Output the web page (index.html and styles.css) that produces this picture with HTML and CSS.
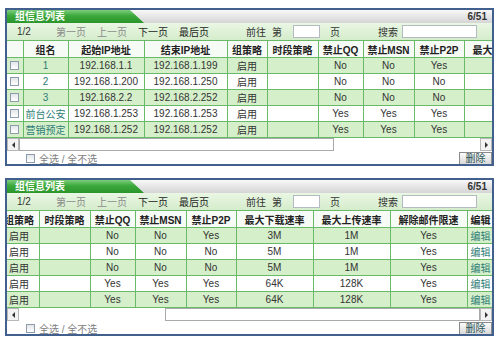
FILE: index.html
```html
<!DOCTYPE html>
<html lang="zh-CN">
  <head>
    <meta charset="UTF-8" />
    <meta name="viewport" content="width=device-width, initial-scale=1.0" />
    <title>组信息列表</title>

    <link rel="stylesheet" href="styles.css">
  </head>
  <body>
    <div class="panel">
      <div class="panel_head">
        <div class="panel_tab">组信息列表</div>
        <div class="panel_count">6/51</div>
      </div>
      <div class="toolbar">
        <span class="page_num">1/2</span>
        <a class="page_link first disabled">第一页</a>
        <a class="page_link disabled">上一页</a>
        <a class="page_link">下一页</a>
        <a class="page_link">最后页</a>
        <span class="goto">前往</span>
        <span class="goto_nth">第</span>
        <input class="page_input" type="text">
        <span class="goto_page">页</span>
        <span class="search_label">搜索</span>
        <input class="search_input" type="text">
      </div>
      <div class="grid_wrap">
        <table class="grid">
          <colgroup>
            <col class="c_check"><col class="c_name"><col class="c_ip"><col class="c_ip2"><col class="c_policy">
            <col class="c_time"><col class="c_qq"><col class="c_msn"><col class="c_p2p">
            <col class="c_rate"><col class="c_rate"><col class="c_rate"><col class="c_edit">
          </colgroup>
          <thead>
            <tr>
              <th></th><th>组名</th><th>起始IP地址</th><th>结束IP地址</th><th>组策略</th>
              <th>时段策略</th><th>禁止QQ</th><th>禁止MSN</th><th>禁止P2P</th>
              <th>最大下载速率</th><th>最大上传速率</th><th>解除邮件限速</th><th>编辑</th>
            </tr>
          </thead>
          <tbody>
            <tr>
              <td><input type="checkbox" class="check"></td><td><a class="link">1</a></td>
              <td>192.168.1.1</td><td>192.168.1.199</td><td>启用</td><td></td>
              <td>No</td><td>No</td><td>Yes</td><td>3M</td><td>1M</td><td>Yes</td><td><a class="link">编辑</a></td>
            </tr>
            <tr>
              <td><input type="checkbox" class="check"></td><td><a class="link">2</a></td>
              <td>192.168.1.200</td><td>192.168.1.250</td><td>启用</td><td></td>
              <td>No</td><td>No</td><td>No</td><td>5M</td><td>1M</td><td>Yes</td><td><a class="link">编辑</a></td>
            </tr>
            <tr>
              <td><input type="checkbox" class="check"></td><td><a class="link">3</a></td>
              <td>192.168.2.2</td><td>192.168.2.252</td><td>启用</td><td></td>
              <td>No</td><td>No</td><td>No</td><td>5M</td><td>1M</td><td>Yes</td><td><a class="link">编辑</a></td>
            </tr>
            <tr>
              <td><input type="checkbox" class="check"></td><td><a class="link">前台公安</a></td>
              <td>192.168.1.253</td><td>192.168.1.253</td><td>启用</td><td></td>
              <td>Yes</td><td>Yes</td><td>Yes</td><td>64K</td><td>128K</td><td>Yes</td><td><a class="link">编辑</a></td>
            </tr>
            <tr>
              <td><input type="checkbox" class="check"></td><td><a class="link">营销预定</a></td>
              <td>192.168.1.252</td><td>192.168.1.252</td><td>启用</td><td></td>
              <td>Yes</td><td>Yes</td><td>Yes</td><td>64K</td><td>128K</td><td>Yes</td><td><a class="link">编辑</a></td>
            </tr>
          </tbody>
        </table>
      </div>
      <div class="hscroll">
        <span class="hscroll_btn left"></span>
        <div class="hscroll_track"><span class="hscroll_thumb"></span></div>
        <span class="hscroll_btn right"></span>
      </div>
      <div class="panel_foot">
        <input type="checkbox" class="check">
        <span class="select_all">全选 / 全不选</span>
        <button class="delete_btn">删除</button>
      </div>
    </div>

    <!-- same list, scrolled to the right -->
    <div class="panel scrolled">
      <div class="panel_head">
        <div class="panel_tab">组信息列表</div>
        <div class="panel_count">6/51</div>
      </div>
      <div class="toolbar">
        <span class="page_num">1/2</span>
        <a class="page_link first disabled">第一页</a>
        <a class="page_link disabled">上一页</a>
        <a class="page_link">下一页</a>
        <a class="page_link">最后页</a>
        <span class="goto">前往</span>
        <span class="goto_nth">第</span>
        <input class="page_input" type="text">
        <span class="goto_page">页</span>
        <span class="search_label">搜索</span>
        <input class="search_input" type="text">
      </div>
      <div class="grid_wrap">
        <table class="grid">
          <colgroup>
            <col class="c_check"><col class="c_name"><col class="c_ip"><col class="c_ip2"><col class="c_policy">
            <col class="c_time"><col class="c_qq"><col class="c_msn"><col class="c_p2p">
            <col class="c_rate"><col class="c_rate"><col class="c_rate"><col class="c_edit">
          </colgroup>
          <thead>
            <tr>
              <th></th><th>组名</th><th>起始IP地址</th><th>结束IP地址</th><th>组策略</th>
              <th>时段策略</th><th>禁止QQ</th><th>禁止MSN</th><th>禁止P2P</th>
              <th>最大下载速率</th><th>最大上传速率</th><th>解除邮件限速</th><th>编辑</th>
            </tr>
          </thead>
          <tbody>
            <tr>
              <td><input type="checkbox" class="check"></td><td><a class="link">1</a></td>
              <td>192.168.1.1</td><td>192.168.1.199</td><td>启用</td><td></td>
              <td>No</td><td>No</td><td>Yes</td><td>3M</td><td>1M</td><td>Yes</td><td><a class="link">编辑</a></td>
            </tr>
            <tr>
              <td><input type="checkbox" class="check"></td><td><a class="link">2</a></td>
              <td>192.168.1.200</td><td>192.168.1.250</td><td>启用</td><td></td>
              <td>No</td><td>No</td><td>No</td><td>5M</td><td>1M</td><td>Yes</td><td><a class="link">编辑</a></td>
            </tr>
            <tr>
              <td><input type="checkbox" class="check"></td><td><a class="link">3</a></td>
              <td>192.168.2.2</td><td>192.168.2.252</td><td>启用</td><td></td>
              <td>No</td><td>No</td><td>No</td><td>5M</td><td>1M</td><td>Yes</td><td><a class="link">编辑</a></td>
            </tr>
            <tr>
              <td><input type="checkbox" class="check"></td><td><a class="link">前台公安</a></td>
              <td>192.168.1.253</td><td>192.168.1.253</td><td>启用</td><td></td>
              <td>Yes</td><td>Yes</td><td>Yes</td><td>64K</td><td>128K</td><td>Yes</td><td><a class="link">编辑</a></td>
            </tr>
            <tr>
              <td><input type="checkbox" class="check"></td><td><a class="link">营销预定</a></td>
              <td>192.168.1.252</td><td>192.168.1.252</td><td>启用</td><td></td>
              <td>Yes</td><td>Yes</td><td>Yes</td><td>64K</td><td>128K</td><td>Yes</td><td><a class="link">编辑</a></td>
            </tr>
          </tbody>
        </table>
      </div>
      <div class="hscroll">
        <span class="hscroll_btn left"></span>
        <div class="hscroll_track"><span class="hscroll_thumb"></span></div>
        <span class="hscroll_btn right"></span>
      </div>
      <div class="panel_foot">
        <input type="checkbox" class="check">
        <span class="select_all">全选 / 全不选</span>
        <button class="delete_btn">删除</button>
      </div>
    </div>
  </body>
</html>
```

FILE: styles.css
```css
* {
  box-sizing: border-box;
  padding: 0;
  margin: 0;
}
body {
  font-family: "Liberation Sans", "Noto Sans CJK SC", sans-serif;
  font-size: 10px;
  color: #333;
  background: #fff;
  padding: 8px 0 0 5px;
}
.panel {
  width: 489px;
  border: 2px solid #41608e;
  background: #fff;
}
.panel + .panel {
  margin-top: 12px;
}
.panel_head {
  display: flex;
  height: 13px;
  line-height: 13px;
  background: linear-gradient(#f8f8f8, #d5d5d5);
}
.panel_tab {
  width: 137px;
  padding-left: 8px;
  clip-path: polygon(0 0, 123px 0, 100% 100%, 0 100%);
  background: linear-gradient(#7ccd7c, #3ba83b 45%, #2b952b);
  color: #fff;
  font-weight: bold;
}
.panel_count {
  margin-left: auto;
  padding-right: 5px;
  font-weight: bold;
  color: #333;
}
.toolbar {
  display: flex;
  align-items: center;
  height: 17px;
  padding-left: 10px;
  background: linear-gradient(#e9f6e4, #d5edcb);
  color: #333;
}
.page_link {
  margin-left: 11px;
  color: #222;
}
.page_link.first {
  margin-left: 25px;
}
.page_link.disabled {
  color: #8a8a8a;
}
.goto {
  margin-left: 37px;
}
.goto_nth {
  margin-left: 6px;
}
.page_input,
.search_input {
  height: 13px;
  border: 1px solid #b4bac2;
  background: #fff;
}
.page_input {
  width: 27px;
  margin-left: 11px;
}
.goto_page {
  margin-left: 10px;
}
.search_label {
  margin-left: 38px;
}
.search_input {
  width: 75px;
  margin-left: 4px;
}
.grid_wrap {
  overflow: hidden;
}
.grid {
  table-layout: fixed;
  width: 715px;
  border-collapse: collapse;
}
.c_check { width: 16px; }
.c_name { width: 45px; }
.c_ip { width: 76px; }
.c_ip2 { width: 83px; }
.c_policy { width: 40px; }
.c_time { width: 51px; }
.c_qq { width: 45px; }
.c_msn { width: 51px; }
.c_p2p { width: 50px; }
.c_rate { width: 77px; }
.c_edit { width: 27px; }
.grid th,
.grid td {
  height: 16px;
  padding: 0;
  border: 1px solid #68ba68;
  text-align: center;
  white-space: nowrap;
  overflow: hidden;
}
.grid th {
  height: 17px;
  background: #f7fbf5;
  color: #222;
  font-weight: bold;
}
.grid th:first-child,
.grid td:first-child {
  border-left: 0;
}
.grid tbody tr:nth-child(odd) td {
  background: #d5efca;
}
.scrolled .grid {
  margin-left: -228px;
}
.link {
  color: #2e7d76;
}
.check {
  appearance: none;
  display: block;
  width: 9px;
  height: 9px;
  border: 1px solid #8d9cab;
  background: linear-gradient(#e4e6ea, #fff);
}
.grid .check {
  margin: 0 auto;
}
.hscroll {
  display: flex;
  height: 13px;
}
.hscroll_btn {
  display: flex;
  align-items: center;
  justify-content: center;
  width: 12px;
  border: 1px solid #b8b8b8;
  background: #f3f3f3;
}
.hscroll_btn::before {
  content: "";
  border: 3px solid transparent;
}
.hscroll_btn.left::before {
  border-left-width: 0;
  border-right-color: #333;
}
.hscroll_btn.right::before {
  border-right-width: 0;
  border-left-color: #333;
}
.hscroll_track {
  flex: 1;
  display: flex;
  background: #fff;
}
.hscroll_thumb {
  width: 315px;
  border: 1px solid #a9a9a9;
  background: #fff;
}
.scrolled .hscroll_thumb {
  margin-left: auto;
}
.panel_foot {
  display: flex;
  align-items: flex-start;
  height: 13px;
  overflow: hidden;
}
.panel_foot .check {
  margin: 3px 4px 0 19px;
}
.select_all {
  padding-top: 2px;
  line-height: 13px;
  color: #808080;
}
.delete_btn {
  margin: 1px 0 0 auto;
  width: 33px;
  height: 13px;
  border: 1px solid #8a8a8a;
  background: linear-gradient(#fbfbfb, #d9d9d9);
  color: #2a5656;
  font: inherit;
  line-height: 11px;
}
```
